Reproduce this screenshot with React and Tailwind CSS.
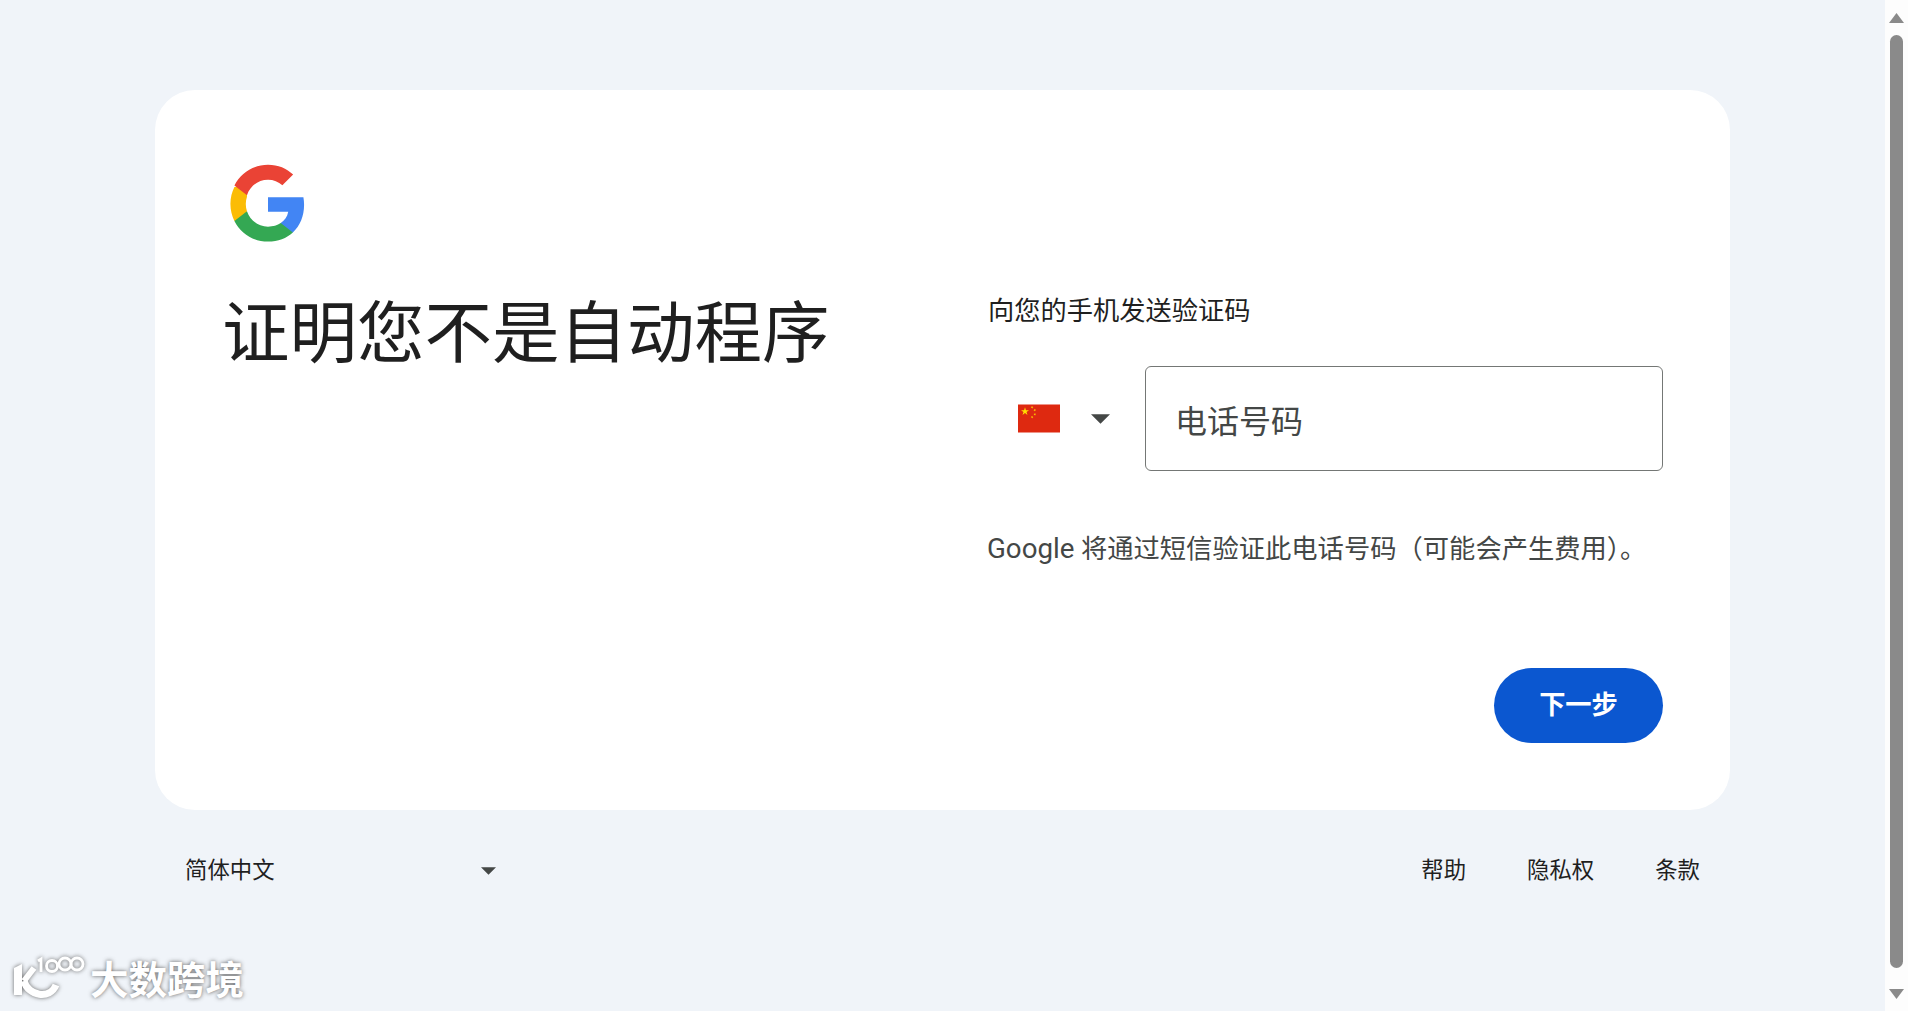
const cjk = 'font-["Roboto","Noto_Sans_CJK_SC",sans-serif]';

const GoogleLogo = () => (
	<svg viewBox="0 0 48 48" className="w-[82px] h-[82px]">
		<path fill="#4285F4" d="M45.12 24.5c0-1.56-.14-3.06-.4-4.5H24v8.51h11.84c-.51 2.75-2.06 5.08-4.39 6.64v5.52h7.11c4.16-3.83 6.56-9.47 6.56-16.17z" />
		<path fill="#34A853" d="M24 46c5.94 0 10.92-1.97 14.56-5.33l-7.11-5.52c-1.97 1.32-4.49 2.1-7.45 2.1-5.73 0-10.58-3.87-12.31-9.07H4.34v5.7C7.96 41.07 15.4 46 24 46z" />
		<path fill="#FBBC05" d="M11.69 28.18C11.25 26.86 11 25.45 11 24s.25-2.86.69-4.18v-5.7H4.34C2.85 17.09 2 20.45 2 24c0 3.55.85 6.91 2.34 9.88l7.35-5.7z" />
		<path fill="#EA4335" d="M24 9.75c3.23 0 6.13 1.11 8.41 3.29l6.31-6.31C34.91 3.18 29.93 1 24 1 15.4 1 7.96 5.93 4.34 13.12l7.35 5.7c1.73-5.2 6.58-9.07 12.31-9.07z" />
	</svg>
);

const Star = ({ x, y, r, rot = 0 }) => (
	<polygon
		fill="#ffde00"
		transform={`translate(${x} ${y}) rotate(${rot}) scale(${r})`}
		points="0,-1 0.225,-0.309 0.951,-0.309 0.363,0.118 0.588,0.809 0,0.382 -0.588,0.809 -0.363,0.118 -0.951,-0.309 -0.225,-0.309"
	/>
);

const Flag = () => (
	<svg viewBox="0 0 30 20" className="w-[42px] h-[29px]">
		<rect width="30" height="20" fill="#de2910" />
		<Star x={5} y={5} r={3} />
		<Star x={10} y={2} r={1} rot={23} />
		<Star x={12} y={4} r={1} rot={46} />
		<Star x={12} y={7} r={1} rot={70} />
		<Star x={10} y={9} r={1} rot={21} />
	</svg>
);

const Caret = ({ className }) => (
	<svg viewBox="0 0 10 5" className={className}>
		<path d="M0 0h10L5 5z" fill="#444746" />
	</svg>
);

const Scrollbar = () => (
	<aside className="w-[23px] shrink-0 bg-[#fdfdfd] flex flex-col items-center pt-[13px] pb-[12px]">
		<svg viewBox="0 0 15 10" className="w-[15px] h-[10px] shrink-0">
			<path d="M7.5 0L15 10H0z" fill="#8a8a8a" />
		</svg>
		<div className="w-[13px] flex-1 mt-[12px] mb-[21px] rounded-full bg-[#8a8a8a]" />
		<svg viewBox="0 0 15 10" className="w-[15px] h-[10px] shrink-0">
			<path d="M7.5 10L0 0h15z" fill="#8a8a8a" />
		</svg>
	</aside>
);

const Watermark = () => (
	<div className="absolute left-[10px] bottom-[5px] flex items-center">
		<svg
			viewBox="0 0 80 50"
			className="w-[80px] h-[50px] drop-shadow-[0_0_2px_rgba(90,90,90,0.9)]"
			fill="none"
			stroke="#fff"
		>
			<path d="M4 12l8-4v31H4z" fill="#fff" stroke="none" />
			<path d="M14 25L24 12" strokeWidth="6" />
			<path d="M14 25c4 15 26 19 32 4" strokeWidth="7" />
			<path d="M31 16V3l-3 2" strokeWidth="2.8" />
			<circle cx="42" cy="10" r="5.5" strokeWidth="2.8" />
			<circle cx="55" cy="8" r="6" strokeWidth="2.8" />
			<circle cx="67" cy="8" r="6" strokeWidth="2.8" />
		</svg>
		<span className={`${cjk} text-[38.5px] leading-none font-bold text-white [text-shadow:0_0_4px_rgba(70,70,70,0.85)]`}>
			大数跨境
		</span>
	</div>
);

export default function App() {
	return (
		<div className={`${cjk} relative h-[1011px] flex bg-[#f0f4f9] overflow-hidden`}>
			<main className="flex-1 min-w-0 pt-[90px] pl-[155px] pr-[155px]">
				<section className="h-[720px] rounded-[40px] bg-white flex pl-[72px] pr-[67px]">
					<div className="w-[761px] shrink-0 pt-[73px]">
						<GoogleLogo />
						<h1 className="mt-[49px] -ml-[5px] text-[67.5px] leading-[80px] font-normal text-[#1f1f1f] whitespace-nowrap">
							证明您不是自动程序
						</h1>
					</div>

					<div className="flex-1 flex flex-col pt-[205px]">
						<p className="text-[26.25px] leading-[32px] text-[#1f1f1f]">向您的手机发送验证码</p>

						<div className="mt-[39px] flex items-center">
							<div className="w-[157px] shrink-0 flex items-center pl-[30px]">
								<Flag />
								<Caret className="ml-[31px] w-[19px] h-[10px]" />
							</div>
							<div className="flex-1 h-[105px] rounded-[6px] border border-[#747775] flex items-center pl-[30px] pt-[7px]">
								<span className="-ml-[1px] text-[32px] leading-[40px] text-[#444746]">电话号码</span>
							</div>
						</div>

						<p className="mt-[60px] -ml-[1px] text-[26.3px] leading-[36px] text-[#444746] whitespace-nowrap">
							<span className="text-[27.7px]">Google</span> 将通过短信验证此电话号码（可能会产生费用）。
						</p>

						<div className="mt-[101px] flex justify-end">
							<button className="w-[169px] h-[75px] rounded-full bg-[#0b57d0] text-white text-[26.25px] font-semibold">
								下一步
							</button>
						</div>
					</div>
				</section>

				<footer className="mt-[41px] h-[40px] flex items-center justify-between pl-[30px] pr-[30px] text-[22.4px] text-[#1f1f1f]">
					<div className="w-[311px] flex items-center justify-between">
						<span>简体中文</span>
						<Caret className="w-[15px] h-[8px]" />
					</div>
					<nav className="flex gap-[61px]">
						<a>帮助</a>
						<a>隐私权</a>
						<a>条款</a>
					</nav>
				</footer>
			</main>

			<Scrollbar />
			<Watermark />
		</div>
	);
}
